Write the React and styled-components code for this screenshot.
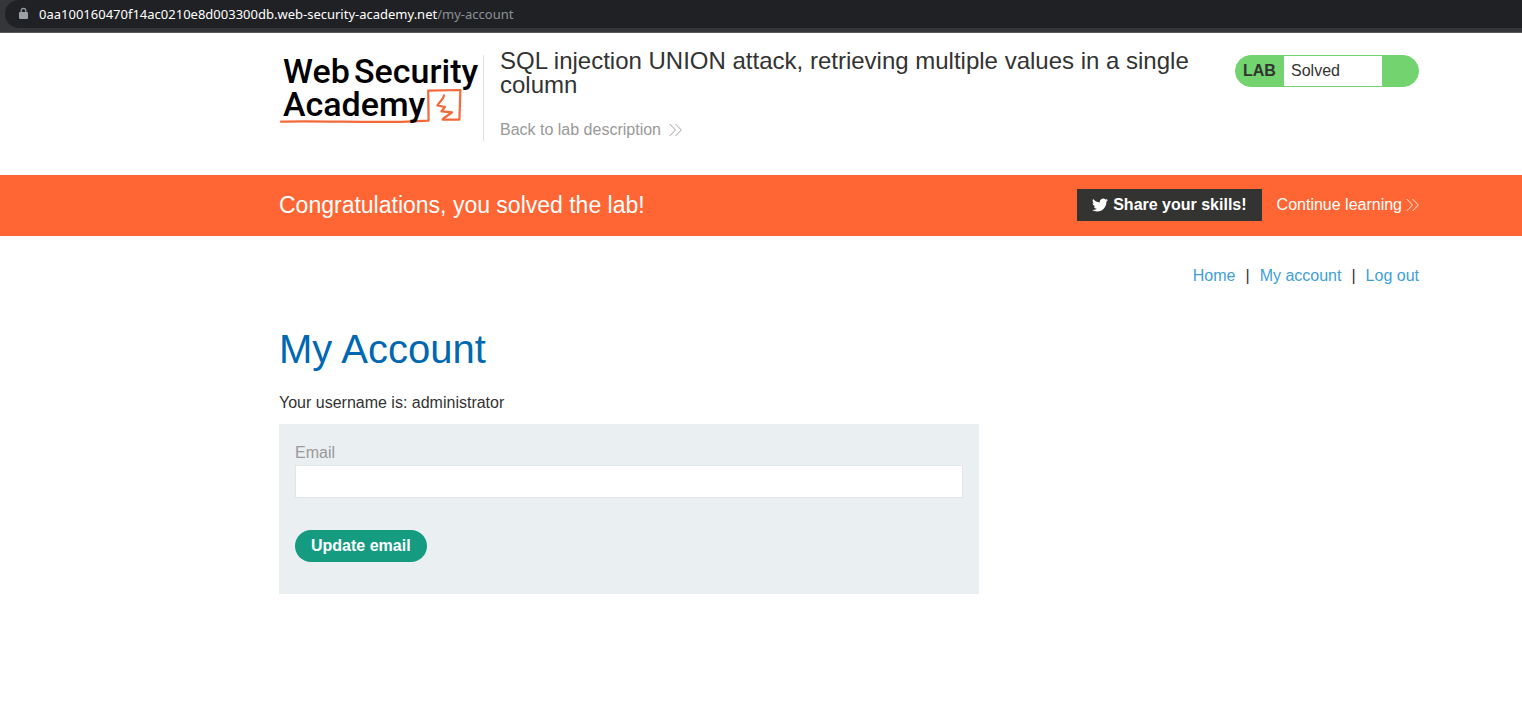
import React from "react";
import styled, { createGlobalStyle } from "styled-components";

const GlobalStyle = createGlobalStyle`
  *, *::before, *::after { box-sizing: border-box; }
  body {
    margin: 0;
    background: #fff;
    color: #333332;
    font-family: "Liberation Sans", Arial, Helvetica, sans-serif;
    font-size: 16px;
    line-height: 20px;
  }
  a { text-decoration: none; }
`;

const AddressBar = styled.div`
  height: 33px;
  padding-left: 5px;
  background: #35363a;
  border-bottom: 1px solid #5a5b5e;
`;

const Omnibox = styled.div`
  display: flex;
  align-items: center;
  gap: 10px;
  height: 28px;
  padding-left: 13px;
  border-radius: 14px 0 0 14px;
  background: #202124;
  color: #8d9196;
  font-family: "Noto Sans", "Open Sans", sans-serif;
  font-size: 13px;
  line-height: 28px;
  white-space: nowrap;
  svg { flex: none; display: block; }
`;

const Host = styled.span`
  color: #fff;
`;

const Container = styled.div`
  padding: 0 103px 0 279px;
`;

const Header = styled.header`
  display: flex;
  align-items: flex-start;
  min-height: 142px;
  padding-top: 16px;
`;

const LogoLink = styled.a`
  flex: none;
  margin-top: 6px;
  height: 86px;
  width: 205px;
  border-right: 1px solid #e0e0e0;
  svg { display: block; overflow: visible; }
`;

const TitleBlock = styled.div`
  flex: 1;
  max-width: 720px;
  padding-left: 16px;
`;

const LabTitle = styled.h2`
  margin: 0 0 23px;
  font-size: 24px;
  font-weight: 400;
  line-height: 24px;
`;

const ArrowLink = styled.a`
  display: inline-flex;
  align-items: center;
  gap: ${(p) => p.$gap};
  color: ${(p) => p.$color};
  white-space: nowrap;
`;

const LabStatus = styled.div`
  flex: none;
  display: flex;
  width: 184px;
  height: 32px;
  margin: 6px 0 0 auto;
  border: 1px solid #72d36f;
  border-radius: 16px;
  background: #72d36f;
  overflow: hidden;
  line-height: 30px;
`;

const LabTag = styled.strong`
  width: 48px;
  padding-left: 7px;
`;

const LabState = styled.span`
  width: 98px;
  padding-left: 7px;
  background: #fff;
`;

const Banner = styled.section`
  background: #ff6633;
  color: #fff;
`;

const BannerRow = styled.div`
  display: flex;
  align-items: center;
  min-height: 61px;
  padding-bottom: 2px;
`;

const BannerTitle = styled.h4`
  flex: 1;
  margin: 0;
  font-size: 23px;
  font-weight: 400;
  line-height: 28px;
`;

const ShareButton = styled.button`
  display: flex;
  align-items: center;
  gap: 5px;
  height: 32px;
  margin-right: 15px;
  padding: 0 15px;
  border: 0;
  background: #333332;
  color: #fff;
  font: inherit;
  font-weight: 700;
  white-space: nowrap;
`;

const Nav = styled.nav`
  display: flex;
  justify-content: flex-end;
  gap: 10px;
  padding-top: 30px;
  a { color: #3f9fd6; }
`;

const PageTitle = styled.h1`
  margin: 40px 0 21px;
  color: #0068b0;
  font-size: 40px;
  font-weight: 400;
  line-height: 46px;
`;

const Username = styled.p`
  margin: 0 0 11px;
`;

const EmailForm = styled.form`
  max-width: 700px;
  padding: 19px 16px 32px;
  background: #eaeff2;
`;

const Label = styled.label`
  display: block;
  margin-bottom: 2px;
  color: #999;
`;

const TextInput = styled.input`
  display: block;
  width: 100%;
  height: 33px;
  margin-bottom: 32px;
  padding: 0 8px;
  border: 1px solid #e2e6e8;
  background: #fff;
  font: inherit;
`;

const SubmitButton = styled.button`
  display: block;
  height: 32px;
  padding: 0 16px;
  border: 0;
  border-radius: 16px;
  background: #159b80;
  color: #fff;
  font: inherit;
  font-weight: 700;
`;

function LockIcon() {
  return (
    <svg width="11" height="14" viewBox="0 0 11 14" aria-hidden="true">
      <rect x="1" y="5" width="9" height="7" rx="1" fill="#9aa0a6" />
      <path d="M3.2 5.5V3.6a2.3 2.3 0 0 1 4.6 0v1.9" fill="none" stroke="#9aa0a6" strokeWidth="1.2" />
    </svg>
  );
}

function Chevrons() {
  return (
    <svg width="13" height="14" viewBox="0 0 13 14" fill="none" stroke="currentColor" strokeWidth="0.9" aria-hidden="true">
      <path d="M0.7 1L6.5 7L0.7 13M6.5 1L12.3 7L6.5 13" />
    </svg>
  );
}

function TwitterIcon() {
  return (
    <svg width="16" height="14" viewBox="0 2 24 20" fill="#fff" aria-hidden="true">
      <path d="M23.95 4.57a10 10 0 0 1-2.82.77 4.96 4.96 0 0 0 2.16-2.72c-.95.55-2 .95-3.13 1.19a4.92 4.92 0 0 0-8.38 4.48C7.69 8.1 4.07 6.13 1.64 3.16a4.82 4.82 0 0 0-.67 2.48c0 1.71.87 3.21 2.19 4.1a4.9 4.9 0 0 1-2.23-.62v.06a4.92 4.92 0 0 0 3.95 4.83 5 5 0 0 1-2.21.08 4.94 4.94 0 0 0 4.6 3.42A9.87 9.87 0 0 1 0 19.54a13.99 13.99 0 0 0 7.55 2.21c9.05 0 13.99-7.5 13.99-13.98 0-.21 0-.42-.02-.63a9.94 9.94 0 0 0 2.46-2.55z" />
    </svg>
  );
}

function Logo() {
  return (
    <svg width="202" height="74" viewBox="0 0 202 74" role="img" aria-label="Web Security Academy">
      <g fill="none" stroke="#f4693a" strokeLinecap="round" strokeLinejoin="round">
        <path d="M2 66.6C40 65.6 90 67.8 128 66.6L149.6 65.6L149.2 35.6L181.4 35L180.4 64.6L164 64.6" strokeWidth="2.2" />
        <path d="M165 40.4C164 45 160 47 158.4 50.4L166 52L162.4 56.4L173 57.4C170 60 166 61.4 163.6 64.4" strokeWidth="2.2" />
      </g>
      <g fill="#000" fontFamily="Roboto, sans-serif" fontWeight="500" fontSize="34">
        <text x="4" y="28">Web</text>
        <text x="75" y="28">Security</text>
        <text x="4" y="61">Academy</text>
      </g>
    </svg>
  );
}

export default function App() {
  return (
    <>
      <GlobalStyle />
      <AddressBar>
        <Omnibox>
          <LockIcon />
          <span>
            <Host>0aa100160470f14ac0210e8d003300db.web-security-academy.net</Host>/my-account
          </span>
        </Omnibox>
      </AddressBar>
      <Container>
        <Header>
          <LogoLink href="#academy">
            <Logo />
          </LogoLink>
          <TitleBlock>
            <LabTitle>SQL injection UNION attack, retrieving multiple values in a single column</LabTitle>
            <ArrowLink href="#lab" $color="#999" $gap="8px">
              Back to lab description
              <Chevrons />
            </ArrowLink>
          </TitleBlock>
          <LabStatus>
            <LabTag>LAB</LabTag>
            <LabState>Solved</LabState>
          </LabStatus>
        </Header>
      </Container>
      <Banner>
        <Container>
          <BannerRow>
            <BannerTitle>Congratulations, you solved the lab!</BannerTitle>
            <ShareButton type="button">
              <TwitterIcon />
              Share your skills!
            </ShareButton>
            <ArrowLink href="#learning" $color="#fff" $gap="4px">
              Continue learning
              <Chevrons />
            </ArrowLink>
          </BannerRow>
        </Container>
      </Banner>
      <Container as="main">
        <Nav>
          <a href="#home">Home</a>
          <span>|</span>
          <a href="#account">My account</a>
          <span>|</span>
          <a href="#logout">Log out</a>
        </Nav>
        <PageTitle>My Account</PageTitle>
        <Username>Your username is: administrator</Username>
        <EmailForm>
          <Label htmlFor="email">Email</Label>
          <TextInput id="email" type="email" name="email" />
          <SubmitButton type="button">Update email</SubmitButton>
        </EmailForm>
      </Container>
    </>
  );
}
